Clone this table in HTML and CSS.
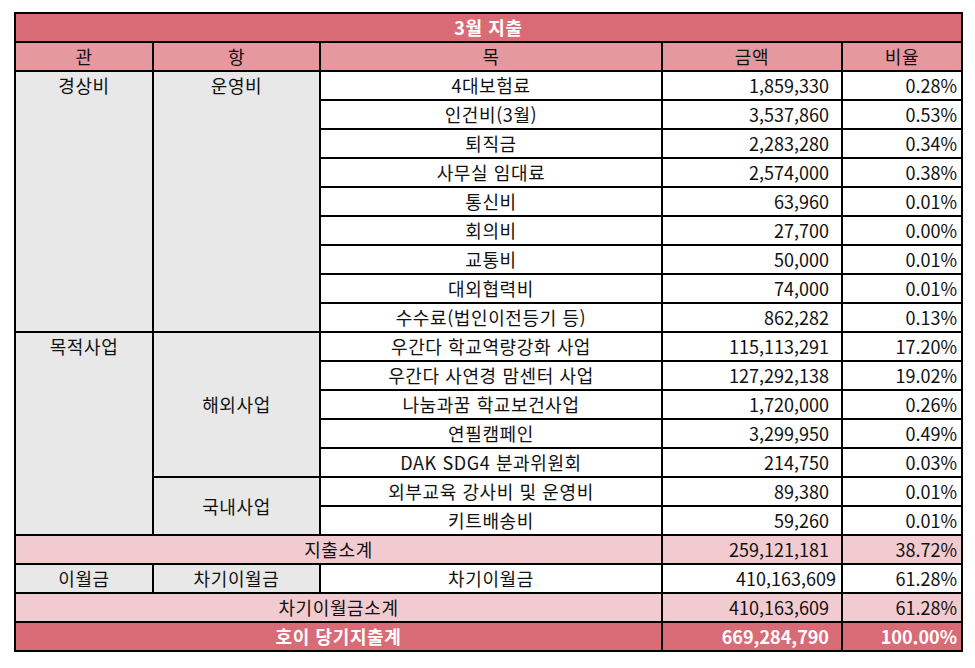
FILE: index.html
```html
<!DOCTYPE html>
<html lang="ko">
<head>
<meta charset="utf-8">
<link rel="stylesheet" href="styles.css">
</head>
<body>
<table class="sheet">
  <colgroup>
    <col class="c1"><col class="c2"><col class="c3"><col class="c4"><col class="c5">
  </colgroup>
  <tr class="title"><td colspan="5" class="m">3월 지출</td></tr>
  <tr class="head"><td class="m">관</td><td class="m">항</td><td class="m">목</td><td class="m">금액</td><td class="m">비율</td></tr>
  <tr><td class="g top" rowspan="9">경상비</td><td class="g top" rowspan="9">운영비</td><td class="m">4대보험료</td><td class="n">1,859,330</td><td class="p">0.28%</td></tr>
  <tr><td class="m">인건비(3월)</td><td class="n">3,537,860</td><td class="p">0.53%</td></tr>
  <tr><td class="m">퇴직금</td><td class="n">2,283,280</td><td class="p">0.34%</td></tr>
  <tr><td class="m">사무실 임대료</td><td class="n">2,574,000</td><td class="p">0.38%</td></tr>
  <tr><td class="m">통신비</td><td class="n">63,960</td><td class="p">0.01%</td></tr>
  <tr><td class="m">회의비</td><td class="n">27,700</td><td class="p">0.00%</td></tr>
  <tr><td class="m">교통비</td><td class="n">50,000</td><td class="p">0.01%</td></tr>
  <tr><td class="m">대외협력비</td><td class="n">74,000</td><td class="p">0.01%</td></tr>
  <tr><td class="m">수수료(법인이전등기 등)</td><td class="n">862,282</td><td class="p">0.13%</td></tr>
  <tr><td class="g top" rowspan="7">목적사업</td><td class="g mid" rowspan="5">해외사업</td><td class="m">우간다 학교역량강화 사업</td><td class="n">115,113,291</td><td class="p">17.20%</td></tr>
  <tr><td class="m">우간다 사연경 맘센터 사업</td><td class="n">127,292,138</td><td class="p">19.02%</td></tr>
  <tr><td class="m">나눔과꿈 학교보건사업</td><td class="n">1,720,000</td><td class="p">0.26%</td></tr>
  <tr><td class="m">연필캠페인</td><td class="n">3,299,950</td><td class="p">0.49%</td></tr>
  <tr><td class="m">DAK SDG4 분과위원회</td><td class="n">214,750</td><td class="p">0.03%</td></tr>
  <tr><td class="g mid" rowspan="2">국내사업</td><td class="m">외부교육 강사비 및 운영비</td><td class="n">89,380</td><td class="p">0.01%</td></tr>
  <tr><td class="m">키트배송비</td><td class="n">59,260</td><td class="p">0.01%</td></tr>
  <tr class="sub"><td colspan="3" class="m">지출소계</td><td class="n">259,121,181</td><td class="p">38.72%</td></tr>
  <tr><td class="g">이월금</td><td class="g">차기이월금</td><td class="m">차기이월금</td><td class="n wide">410,163,609</td><td class="p">61.28%</td></tr>
  <tr class="sub"><td colspan="3" class="m">차기이월금소계</td><td class="n">410,163,609</td><td class="p">61.28%</td></tr>
  <tr class="total"><td colspan="3" class="m">호이 당기지출계</td><td class="n">669,284,790</td><td class="p">100.00%</td></tr>
</table>
</body>
</html>
```

FILE: styles.css
```css
html, body {
  margin: 0;
  padding: 0;
  background: #ffffff;
}
body {
  padding: 12px 0 0 14px;
  font-family: "Noto Sans CJK KR", "Noto Sans", sans-serif;
  font-size: 18px;
  color: #111111;
}
.sheet {
  border-collapse: collapse;
  table-layout: fixed;
  width: 947px;
  border: 2px solid #000;
}
.c1 { width: 138px; }
.c2 { width: 167px; }
.c3 { width: 342px; }
.c4 { width: 180px; }
.c5 { width: 120px; }
.sheet td {
  border: 2px solid #000;
  height: 27px;
  padding: 0;
  line-height: 27px;
  white-space: nowrap;
  background: #ffffff;
  vertical-align: middle;
  overflow: hidden;
}
.title td {
  background: #d96b76;
  color: #ffffff;
  font-weight: bold;
}
.head td {
  background: #e5999f;
}
.sheet td.g {
  background: #e8e8e8;
  text-align: center;
  letter-spacing: 0.6px;
}
.sheet td.top { vertical-align: top; }
.sheet td.mid { vertical-align: middle; }
.m {
  text-align: center;
  letter-spacing: 0.6px;
}
.n { text-align: right; padding-right: 12px !important; }
.n.wide { padding-right: 5px !important; }
.p { text-align: right; padding-right: 4px !important; }
.sub td {
  background: #f2cbd0;
}
.total td {
  background: #d96b76;
  color: #ffffff;
  font-weight: bold;
}
```
